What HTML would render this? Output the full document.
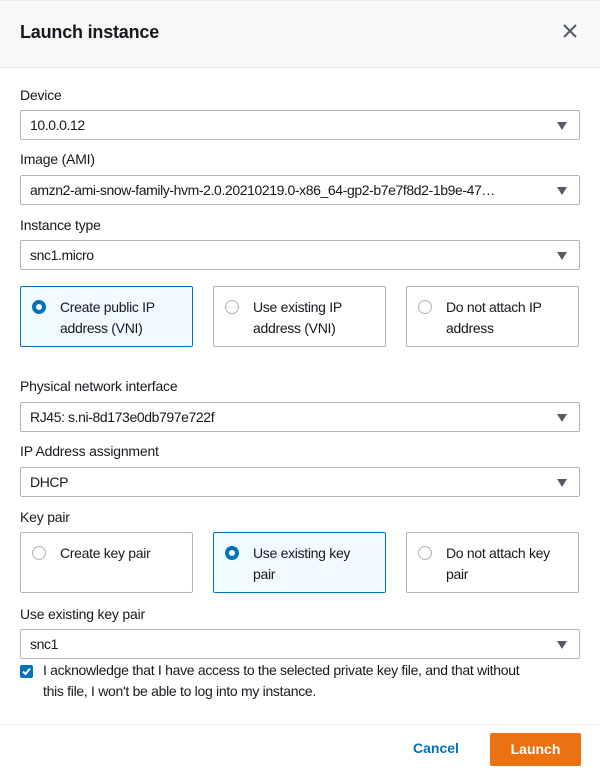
<!DOCTYPE html>
<html><head><style>
*{box-sizing:border-box;margin:0;padding:0}
body{width:600px;height:773px;background:#fff;font-family:"Liberation Sans",sans-serif;color:#16191f;font-size:14px;position:relative;overflow:hidden}
.hdr{position:absolute;left:0;top:0;width:600px;height:68px;background:#f8f8f8;border-bottom:1px solid #e3e6e6;border-top:1px solid #eaeded}
.hdr h1{position:absolute;left:20px;top:21px;font-size:18px;font-weight:bold;letter-spacing:-0.2px}
.x{position:absolute;left:562px;top:22px}
.lbl{position:absolute;left:20px;font-size:14px;letter-spacing:-0.2px}
.sel{position:absolute;left:20px;width:560px;height:30px;border:1px solid #aab7b8;border-radius:2px;padding:0 30px 0 9px;line-height:28px;white-space:nowrap;overflow:hidden;letter-spacing:-0.4px}
.sel:after{content:"";position:absolute;right:12px;top:11px;border-left:5px solid transparent;border-right:5px solid transparent;border-top:8px solid #545b64}
.tile{position:absolute;width:173px;height:61px;border:1px solid #aab7b8;border-radius:2px;padding:10px 4px 0 39px;line-height:21px;letter-spacing:-0.3px;white-space:nowrap}
.tile.on{background:#f1faff;border-color:#0073bb}
.r{position:absolute;left:11px;top:13px;width:14px;height:14px;border-radius:50%;border:1px solid #aab7b8;background:#fff}
.on .r{border:4px solid #0073bb}
.cb{position:absolute;left:20px;top:665px;width:13px;height:13px;background:#0073bb;border-radius:2px}
.ack{position:absolute;left:43px;top:660px;line-height:21px;width:540px;letter-spacing:-0.3px}
.foot{position:absolute;left:0;top:724px;width:600px;border-top:1px solid #eaeded}
.cancel{position:absolute;left:413px;top:740px;color:#0073bb;font-weight:bold}
.launch{position:absolute;left:490px;top:733px;width:91px;height:33px;background:#ec7211;color:#fff;font-weight:bold;text-align:center;line-height:33px;border-radius:2px}
</style></head><body>
<div class="hdr"><h1>Launch instance</h1>
<svg class="x" width="16" height="16" viewBox="0 0 16 16"><path d="M2 2L14 14M14 2L2 14" stroke="#545b64" stroke-width="2"/></svg></div>
<div class="lbl" style="top:87px">Device</div>
<div class="sel" style="top:110px">10.0.0.12</div>
<div class="lbl" style="top:151px">Image (AMI)</div>
<div class="sel" style="top:175px">amzn2-ami-snow-family-hvm-2.0.20210219.0-x86_64-gp2-b7e7f8d2-1b9e-47…</div>
<div class="lbl" style="top:217px">Instance type</div>
<div class="sel" style="top:240px">snc1.micro</div>
<div class="tile on" style="left:20px;top:286px"><span class="r"></span>Create public IP<br>address (VNI)</div>
<div class="tile" style="left:213px;top:286px"><span class="r"></span>Use existing IP<br>address (VNI)</div>
<div class="tile" style="left:406px;top:286px"><span class="r"></span>Do not attach IP<br>address</div>
<div class="lbl" style="top:378px">Physical network interface</div>
<div class="sel" style="top:402px">RJ45: s.ni-8d173e0db797e722f</div>
<div class="lbl" style="top:443px">IP Address assignment</div>
<div class="sel" style="top:467px">DHCP</div>
<div class="lbl" style="top:509px">Key pair</div>
<div class="tile" style="left:20px;top:532px"><span class="r"></span>Create key pair</div>
<div class="tile on" style="left:213px;top:532px"><span class="r"></span>Use existing key<br>pair</div>
<div class="tile" style="left:406px;top:532px"><span class="r"></span>Do not attach key<br>pair</div>
<div class="lbl" style="top:606px">Use existing key pair</div>
<div class="sel" style="top:629px">snc1</div>
<div class="cb"><svg width="13" height="13" viewBox="0 0 13 13"><path d="M3 6.5L5.5 9L10 3.5" stroke="#fff" stroke-width="2" fill="none"/></svg></div>
<div class="ack">I acknowledge that I have access to the selected private key file, and that without<br>this file, I won't be able to log into my instance.</div>
<div class="foot"></div>
<div class="cancel">Cancel</div>
<div class="launch">Launch</div>
</body></html>
